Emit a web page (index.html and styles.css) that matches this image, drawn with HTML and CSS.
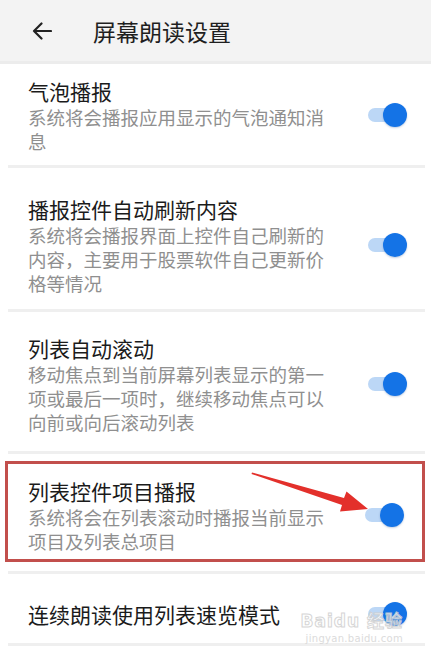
FILE: index.html
```html
<!DOCTYPE html>
<html lang="zh-CN">
<head>
<meta charset="utf-8">
<title>屏幕朗读设置</title>
<link rel="stylesheet" href="styles.css">
</head>
<body>
<div class="screen">
  <header class="appbar">
    <svg class="back" width="20" height="18" viewBox="0 0 20 18">
      <path d="M19 9H2M9.5 1.5L2 9l7.5 7.5" fill="none" stroke="#222" stroke-width="2.2" stroke-linecap="round" stroke-linejoin="round"/>
    </svg>
    <h1 class="title">屏幕朗读设置</h1>
  </header>

  <ul class="list">
    <li class="item item-first">
      <div class="text">
        <div class="name">气泡播报</div>
        <div class="desc">系统将会播报应用显示的气泡通知消息</div>
      </div>
      <span class="switch"><span class="knob"></span></span>
    </li>
    <li class="item item-second">
      <div class="text">
        <div class="name">播报控件自动刷新内容</div>
        <div class="desc">系统将会播报界面上控件自己刷新的内容，主要用于股票软件自己更新价格等情况</div>
      </div>
      <span class="switch"><span class="knob"></span></span>
    </li>
    <li class="item item-third">
      <div class="text">
        <div class="name">列表自动滚动</div>
        <div class="desc">移动焦点到当前屏幕列表显示的第一项或最后一项时，继续移动焦点可以向前或向后滚动列表</div>
      </div>
      <span class="switch"><span class="knob"></span></span>
    </li>
    <li class="item item-marked">
      <div class="text">
        <div class="name">列表控件项目播报</div>
        <div class="desc">系统将会在列表滚动时播报当前显示项目及列表总项目</div>
      </div>
      <span class="switch"><span class="knob"></span></span>
      <svg class="pointer" width="130" height="60" viewBox="0 0 130 60">
        <path d="M12 12.5 L104 38 L106.5 31.5 L128 49 L100 51.5 L102 45 L11.5 14 Z" fill="#e3302b"/>
      </svg>
    </li>
    <li class="item item-single">
      <div class="text">
        <div class="name">连续朗读使用列表速览模式</div>
      </div>
      <span class="switch"><span class="knob"></span></span>
      <div class="mark">
        <span class="mark-logo">Bai<b>du</b> 经验</span>
        <span class="mark-url">jingyan.baidu.com</span>
      </div>
    </li>
    <li class="item item-tail"></li>
  </ul>
</div>
</body>
</html>
```

FILE: styles.css
```css
* { box-sizing: border-box; }

html, body {
  margin: 0;
  padding: 0;
  background: #fff;
}

body {
  font-family: "Noto Sans CJK SC", "Noto Sans", sans-serif;
  color: #1c1c1c;
}

.screen {
  width: 431px;
  height: 653px;
  overflow: hidden;
  background: #fff;
}

.appbar {
  height: 64px;
  background: #f3f3f3;
  display: flex;
  align-items: center;
  padding-left: 32px;
  border-bottom: 3px solid #ececec;
}

.back { display: block; }

.title {
  margin: 0 0 0 41px;
  font-size: 23px;
  font-weight: 400;
  line-height: 30px;
  color: #1f1f1f;
}

.list {
  list-style: none;
  margin: 0 6px 0 8px;
  padding: 0;
}

.item {
  position: relative;
  display: flex;
  align-items: center;
  padding: 24px 18px 17px 20px;
  border-bottom: 3px solid #efefef;
  background: #fff;
}

.item-first { padding-top: 13px; padding-bottom: 12px; }
.item-second { padding-top: 27px; padding-bottom: 14px; }
.item-third { padding-top: 22px; padding-bottom: 17px; }
.item-single { padding-top: 26px; padding-bottom: 15px; }
.item-tail { height: 20px; padding: 0; border-bottom: 0; }

.item-marked {
  margin: 7px 0 9px -3px;
  padding: 13px 18px 6px 20px;
  border: 3px solid #c24f4c;
}
.item-marked + .item { border-top: 3px solid #efefef; }

.text { flex: 1; min-width: 0; padding-right: 20px; }

.name {
  font-size: 21px;
  line-height: 28px;
  color: #1b1b1b;
}

.desc {
  font-size: 18.5px;
  line-height: 24px;
  color: #8f8f8f;
  max-width: 302px;
}

.switch {
  position: relative;
  flex: none;
  width: 39px;
  height: 24px;
}
.switch::before {
  content: "";
  position: absolute;
  left: 0;
  top: 5px;
  width: 32px;
  height: 14px;
  border-radius: 7px;
  background: #bcd7f6;
}
.knob {
  position: absolute;
  right: 0;
  top: 0;
  width: 24px;
  height: 24px;
  border-radius: 50%;
  background: #1473e6;
  box-shadow: 0 1px 2px rgba(0, 60, 140, 0.25);
}

.pointer {
  position: absolute;
  left: 232px;
  top: -4px;
}

.mark {
  position: absolute;
  right: 22px;
  top: 38px;
  display: flex;
  flex-direction: column;
  align-items: flex-end;
  font-family: "DejaVu Sans", "Noto Sans CJK SC", sans-serif;
  color: #fff;
  pointer-events: none;
  opacity: 0.85;
}
.mark-logo {
  font-size: 17px;
  line-height: 18px;
  font-weight: 700;
  -webkit-text-stroke: 1px #cfcfcf;
  letter-spacing: 1px;
}
.mark-logo b { font-weight: 700; }
.mark-url {
  margin-top: 3px;
  font-size: 10px;
  line-height: 12px;
  color: #d6d6d6;
  letter-spacing: 0.3px;
}
```
